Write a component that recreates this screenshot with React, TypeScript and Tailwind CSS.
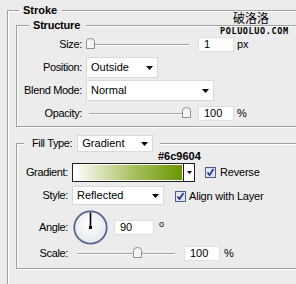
import React from "react";

const Tri = () => (
  <svg width="7" height="4" viewBox="0 0 7 4" className="shrink-0">
    <path d="M0 0H7L3.5 4Z" fill="#000" />
  </svg>
);

function Select({ cls, text }: { cls: string; text: string }) {
  return (
    <div className={"flex items-center justify-between bg-white border border-[#d9d9d9] pl-[4px] pr-[4px] " + cls}>
      <span>{text}</span>
      <Tri />
    </div>
  );
}

function Thumb() {
  return (
    <svg width="9" height="11" viewBox="0 0 9 11">
      <path d="M0.5 10.5V3.5Q0.5 0.5 4.5 0.5Q8.5 0.5 8.5 3.5V10.5Z" fill="#f4f4f4" stroke="#8e8e8e" />
      <path d="M2 9.5V4" stroke="#ffffff" />
    </svg>
  );
}

function Slider({ cls, pos }: { cls: string; pos: string }) {
  return (
    <div className={"relative h-[15px] " + cls}>
      <div className="absolute left-[3px] right-[2px] top-[7px] h-0 border-t border-b border-t-[#a3a3a3] border-b-[#ffffff]" />
      <div className={"absolute top-[1px] " + pos}>
        <Thumb />
      </div>
    </div>
  );
}

function Input({ cls, text }: { cls: string; text: string }) {
  return (
    <div className={"flex items-center h-[15px] bg-white border border-[#e0e0e0] pl-[5px] " + cls}>{text}</div>
  );
}

function Check() {
  return (
    <svg width="11" height="11" viewBox="0 0 11 11" className="shrink-0">
      <rect x="0.5" y="0.5" width="10" height="10" fill="#dfe5f1" stroke="#4b5f8c" />
      <path d="M2.5 5.5L4.5 8L8.5 2" fill="none" stroke="#2a3a8c" strokeWidth="1.8" />
    </svg>
  );
}

export default function App() {
  const lbl = "text-right pr-[4px] tracking-[-0.35px]";
  return (
    <div className="relative w-[296px] h-[284px] overflow-hidden bg-[#ececec] text-[11px] leading-[13px] text-black [font-family:'Liberation_Sans',Arial,sans-serif]">
      <div className="ml-[7px] mt-[10px] w-[400px] h-[290px] border-l border-t border-[#a0a0a0] shadow-[inset_1px_1px_0_#ffffff]">
        <div className="flex -mt-[7px] h-[13px]">
          <span className="ml-[11px] pl-[4px] pr-[5px] bg-[#ececec] font-bold">Stroke</span>
        </div>

        {/* Structure */}
        <div className="ml-[8px] mt-[8px] w-[380px] border-l border-t border-b border-[#a0a0a0] shadow-[inset_1px_1px_0_#ffffff,0_1px_0_#ffffff] pb-[5px]">
          <div className="flex -mt-[7px] h-[13px]">
            <span className="ml-[12px] pl-[4px] pr-[6px] bg-[#ececec] font-bold tracking-[-0.2px]">Structure</span>
          </div>
          <div className="mt-[5px] flex items-center h-[15px]">
            <div className={"w-[69px] " + lbl}>Size:</div>
            <Slider cls="w-[105px]" pos="left-0" />
            <Input cls="ml-[7px] w-[36px]" text="1" />
            <span className="ml-[3px]">px</span>
          </div>
          <div className="mt-[5px] flex items-center h-[21px]">
            <div className={"w-[69px] " + lbl}>Position:</div>
            <Select cls="w-[72px] h-[21px]" text="Outside" />
          </div>
          <div className="mt-[2px] flex items-center h-[21px]">
            <div className={"w-[69px] " + lbl}>Blend Mode:</div>
            <Select cls="w-[128px] h-[21px]" text="Normal" />
          </div>
          <div className="mt-[5px] flex items-center h-[15px]">
            <div className={"w-[69px] " + lbl}>Opacity:</div>
            <Slider cls="w-[105px]" pos="left-[96px]" />
            <Input cls="ml-[7px] w-[36px]" text="100" />
            <span className="ml-[3px]">%</span>
          </div>
        </div>

        {/* Fill */}
        <div className="ml-[8px] mt-[16px] w-[380px] border-l border-t border-b border-[#a0a0a0] shadow-[inset_1px_1px_0_#ffffff,0_1px_0_#ffffff] pb-[7px]">
          <div className="flex -mt-[9px] h-[17px]">
            <div className="ml-[7px] pl-[8px] pr-[7px] flex items-center bg-[#ececec]">
              <span className="tracking-[-0.35px]">Fill Type:</span>
              <Select cls="ml-[5px] w-[76px] h-[17px]" text="Gradient" />
            </div>
          </div>
          <div className="mt-[11px] flex items-center h-[19px]">
            <div className={"w-[55px] " + lbl}>Gradient:</div>
            <div className="flex w-[123px] h-[19px] border border-[#1e1e1e] bg-white">
              <div className="flex-1 m-[1px] bg-[linear-gradient(to_right,#ffffff,#a8c060_55%,#6c9604)]" />
              <div className="w-[11px] border-l border-[#1e1e1e] flex items-center justify-center">
                <svg width="5" height="3" viewBox="0 0 5 3"><path d="M0 0H5L2.5 3Z" fill="#000" /></svg>
              </div>
            </div>
            <div className="ml-[10px] flex items-center">
              <Check />
              <span className="ml-[4px] tracking-[-0.2px]">Reverse</span>
            </div>
          </div>
          <div className="mt-[4px] flex items-center h-[19px]">
            <div className={"w-[55px] " + lbl}>Style:</div>
            <Select cls="w-[92px] h-[19px]" text="Reflected" />
            <div className="ml-[11px] mt-[1px] flex items-center">
              <Check />
              <span className="ml-[3px] tracking-[-0.2px]">Align with Layer</span>
            </div>
          </div>
          <div className="mt-[5px] flex items-center h-[34px]">
            <div className={"w-[55px] " + lbl}>Angle:</div>
            <svg width="35" height="35" viewBox="0 0 35 35" className="ml-[1px] shrink-0">
              <defs>
                <radialGradient id="g" cx="0.45" cy="0.4" r="0.6">
                  <stop offset="0" stopColor="#ffffff" />
                  <stop offset="1" stopColor="#e6e7ee" />
                </radialGradient>
              </defs>
              <circle cx="17.5" cy="17.5" r="16.2" fill="url(#g)" stroke="#56648c" strokeWidth="1.8" />
              <path d="M17.5 17.5V2.5" stroke="#000" strokeWidth="1.6" />
              <rect x="16" y="16" width="3" height="3" fill="#000" />
            </svg>
            <Input cls="ml-[6px] w-[40px]" text="90" />
            <span className="ml-[5px] -mt-[6px] text-[9px]">o</span>
          </div>
          <div className="mt-[2px] flex items-center h-[15px]">
            <div className={"w-[55px] " + lbl}>Scale:</div>
            <Slider cls="ml-[2px] w-[103px]" pos="left-[59px]" />
            <Input cls="ml-[7px] w-[36px]" text="100" />
            <span className="ml-[4px]">%</span>
          </div>
        </div>
      </div>

      <div className="absolute left-[158px] top-[150px] font-bold text-[11px]">#6c9604</div>
      <div className="absolute left-[233px] top-[10px] text-[12px] leading-[15px] [font-family:'Noto_Sans_CJK_SC',sans-serif]">破洛洛</div>
      <div className="absolute left-[220px] top-[27px] text-[8.5px] leading-[9px] font-bold tracking-[0.6px] [font-family:'DejaVu_Sans_Mono',monospace]">POLUOLUO.COM</div>
    </div>
  );
}
